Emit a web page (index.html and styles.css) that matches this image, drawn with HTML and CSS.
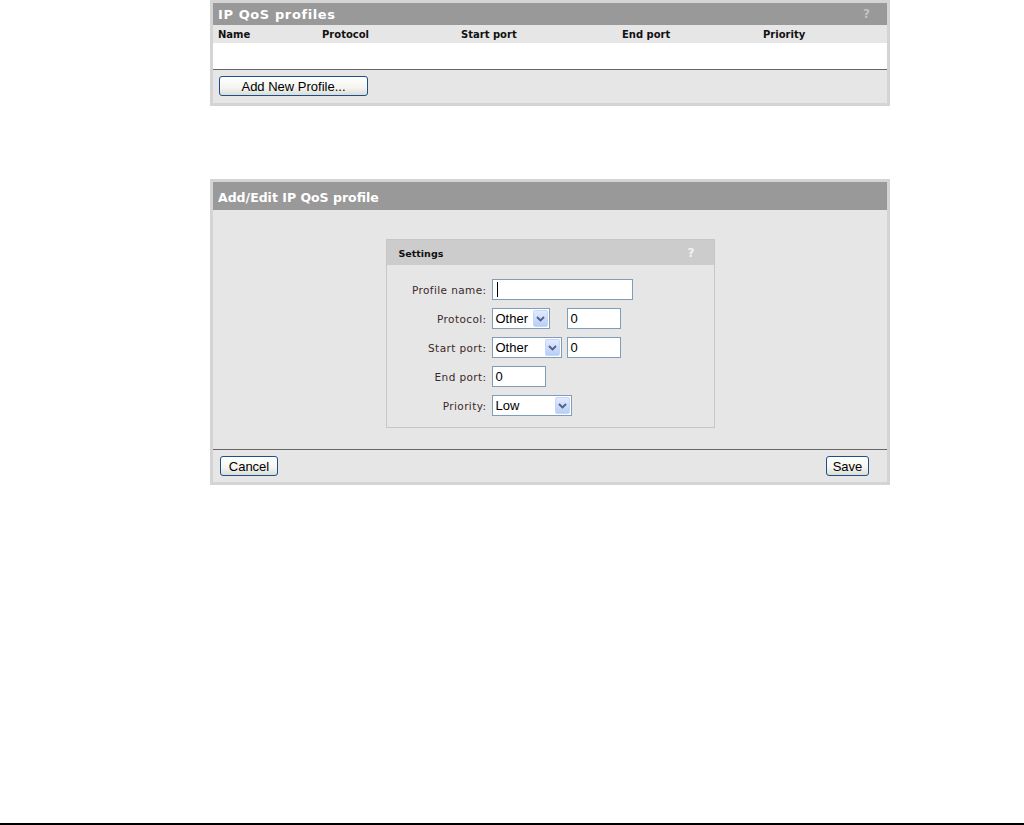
FILE: index.html
```html
<!DOCTYPE html>
<html lang="en">
<head>
    <meta charset="UTF-8">
    <title>IP QoS profiles</title>
    <link rel="stylesheet" href="styles.css">
</head>
<body>
    <div class="panel list-panel">
        <div class="panel-title">
            <span class="title-text wide">IP QoS profiles</span>
            <span class="help">?</span>
        </div>
        <div class="col-heads">
            <span>Name</span>
            <span>Protocol</span>
            <span>Start port</span>
            <span>End port</span>
            <span>Priority</span>
        </div>
        <div class="rows"></div>
        <div class="panel-foot">
            <button class="btn btn-wide">Add New Profile...</button>
        </div>
    </div>

    <div class="panel edit-panel">
        <div class="panel-title tall">
            <span class="title-text">Add/Edit IP QoS profile</span>
        </div>
        <div class="panel-body">
            <div class="settings">
                <div class="settings-head">
                    <span>Settings</span>
                    <span class="help light">?</span>
                </div>
                <div class="form">
                    <label>Profile name:</label>
                    <div class="ctrl">
                        <div class="input w-name"><span class="caret"></span></div>
                    </div>

                    <label>Protocol:</label>
                    <div class="ctrl">
                        <div class="select w-proto"><span>Other</span><span class="arrow"><svg width="9" height="6" viewBox="0 0 9 6"><path d="M1 1 L4.5 4.5 L8 1" fill="none" stroke="#4d6185" stroke-width="1.8"/></svg></span></div>
                        <div class="input w-port gap-l">0</div>
                    </div>

                    <label>Start port:</label>
                    <div class="ctrl">
                        <div class="select w-start"><span>Other</span><span class="arrow"><svg width="9" height="6" viewBox="0 0 9 6"><path d="M1 1 L4.5 4.5 L8 1" fill="none" stroke="#4d6185" stroke-width="1.8"/></svg></span></div>
                        <div class="input w-port">0</div>
                    </div>

                    <label>End port:</label>
                    <div class="ctrl">
                        <div class="input w-port">0</div>
                    </div>

                    <label>Priority:</label>
                    <div class="ctrl">
                        <div class="select w-prio"><span>Low</span><span class="arrow"><svg width="9" height="6" viewBox="0 0 9 6"><path d="M1 1 L4.5 4.5 L8 1" fill="none" stroke="#4d6185" stroke-width="1.8"/></svg></span></div>
                    </div>
                </div>
            </div>
        </div>
        <div class="panel-foot split">
            <button class="btn btn-cancel">Cancel</button>
            <button class="btn btn-save">Save</button>
        </div>
    </div>

    <div class="page-rule"></div>
</body>
</html>
```

FILE: styles.css
```css
body {
    margin: 0;
    min-height: 100vh;
    display: flex;
    flex-direction: column;
    background: #fff;
    font-family: "DejaVu Sans", Verdana, sans-serif;
    color: #222;
}

/* panels */
.panel {
    width: 674px;
    margin-left: 210px;
    border: 3px solid #d4d4d4;
    background: #e6e6e6;
}

.edit-panel {
    margin-top: 73px;
}

.panel-title {
    height: 22px;
    background: #999;
    color: #fff;
    font-weight: bold;
    display: flex;
    align-items: center;
    justify-content: space-between;
    padding: 0 17px 0 5px;
}

.title-text {
    font-size: 12.5px;
}

.title-text.wide {
    font-size: 13px;
    letter-spacing: 0.6px;
}

.panel-title.tall {
    height: 28px;
    padding-top: 2px;
    box-sizing: border-box;
}

.help {
    color: #c4c4c4;
    font-size: 12px;
}

.help.light {
    color: #f2f2f2;
}

.col-heads {
    display: grid;
    grid-template-columns: 104px 139px 161px 141px 1fr;
    height: 18px;
    align-items: center;
    padding-left: 5px;
    font-size: 10px;
    font-weight: bold;
    color: #111;
}

.rows {
    height: 26px;
    background: #fff;
    border-bottom: 1px solid #666;
}

.panel-foot {
    height: 33px;
    display: flex;
    align-items: flex-start;
    padding: 6px 0 0 6px;
    box-sizing: border-box;
}

.panel-foot.split {
    justify-content: space-between;
    padding: 6px 18px 0 7px;
    border-top: 1px solid #666;
    box-sizing: content-box;
    height: 26px;
}

/* buttons */
.btn {
    height: 20px;
    padding: 0;
    border: 1px solid #1c4f8c;
    border-radius: 3px;
    background: linear-gradient(#ffffff, #f4f4f0 60%, #dcdcd6);
    font-family: "Liberation Sans", Arial, sans-serif;
    font-size: 13px;
    color: #000;
}

.btn-wide { width: 149px; }
.btn-cancel { width: 58px; }
.btn-save { width: 43px; }

/* edit form */
.panel-body {
    height: 239px;
    padding-top: 29px;
    box-sizing: border-box;
    display: flex;
    justify-content: center;
}

.settings {
    width: 329px;
    height: 189px;
    border: 1px solid #c6c6c6;
    box-sizing: border-box;
}

.settings-head {
    height: 25px;
    background: #ccc;
    display: flex;
    align-items: center;
    justify-content: space-between;
    padding: 1px 19px 0 12px;
    box-sizing: border-box;
    font-size: 9.5px;
    font-weight: bold;
    color: #111;
}

.form {
    display: grid;
    grid-template-columns: 100px 1fr;
    grid-auto-rows: 21px;
    column-gap: 5px;
    row-gap: 8px;
    padding-top: 14px;
}

.form label {
    font-size: 10.5px;
    color: #3a2a2a;
    text-align: right;
    align-self: center;
    letter-spacing: 0.4px;
}

.ctrl {
    display: flex;
    gap: 5px;
}

.input,
.select {
    height: 21px;
    box-sizing: border-box;
    border: 1px solid #7f9db9;
    background: #fff;
    font-family: "Liberation Sans", Arial, sans-serif;
    font-size: 13px;
    color: #000;
    display: flex;
    align-items: center;
    padding-left: 3px;
}

.w-name { width: 141px; }
.w-port { width: 54px; }
.w-proto { width: 58px; }
.w-start { width: 70px; }
.w-prio { width: 80px; }
.gap-l { margin-left: 12px; }

.caret {
    width: 1px;
    height: 15px;
    background: #000;
    margin-left: 1px;
}

.select {
    justify-content: space-between;
    padding-right: 1px;
}

.arrow {
    width: 15px;
    height: 17px;
    box-sizing: border-box;
    border: 1px solid #c5d5fc;
    border-radius: 2px;
    background: linear-gradient(#e2eafe, #b9cdf6);
    display: flex;
    align-items: center;
    justify-content: center;
}

.page-rule {
    margin-top: auto;
    height: 2px;
    background: #000;
}
```
